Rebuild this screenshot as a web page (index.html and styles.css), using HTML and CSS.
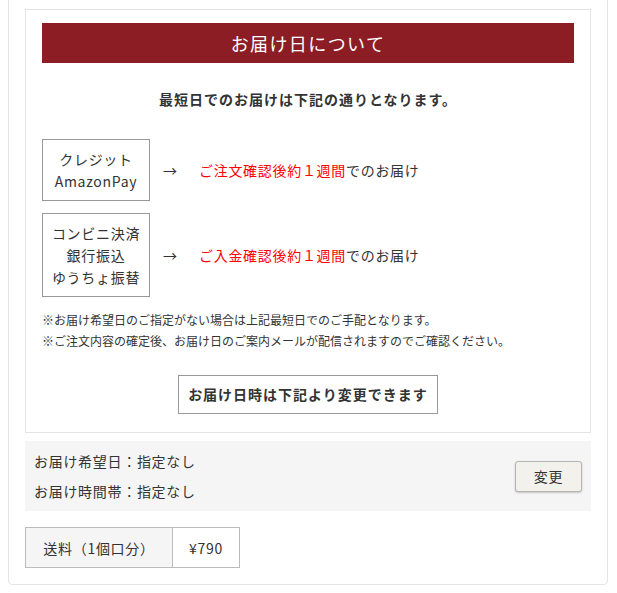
FILE: index.html
```html
<!DOCTYPE html>
<html lang="ja">
  <head>
    <meta charset="UTF-8" />
    <meta name="viewport" content="width=device-width, initial-scale=1.0" />
    <title>お届け日について</title>
    <link rel="stylesheet" href="styles.css">
  </head>
  <body>
    <div class="page">
      <div class="delivery-info">
        <h2 class="delivery-title">お届け日について</h2>
        <p class="lead">最短日でのお届けは下記の通りとなります。</p>

        <div class="pay-row">
          <div class="pay-box">クレジット<br />AmazonPay</div>
          <span class="arrow">→</span>
          <p class="pay-text"><span class="red">ご注文確認後約１週間</span>でのお届け</p>
        </div>
        <div class="pay-row">
          <div class="pay-box">コンビニ決済<br />銀行振込<br />ゆうちょ振替</div>
          <span class="arrow">→</span>
          <p class="pay-text"><span class="red">ご入金確認後約１週間</span>でのお届け</p>
        </div>

        <div class="notes">
          <p>※お届け希望日のご指定がない場合は上記最短日でのご手配となります。</p>
          <p>※ご注文内容の確定後、お届け日のご案内メールが配信されますのでご確認ください。</p>
        </div>

        <div class="change-note">
          <span class="change-label">お届け日時は下記より変更できます</span>
        </div>
      </div>

      <div class="delivery-select">
        <div class="select-values">
          <p>お届け希望日：指定なし</p>
          <p>お届け時間帯：指定なし</p>
        </div>
        <button class="change-btn" type="button">変更</button>
      </div>

      <table class="shipping">
        <tr>
          <th>送料（1個口分）</th>
          <td>¥790</td>
        </tr>
      </table>
    </div>
  </body>
</html>
```

FILE: styles.css
```css
* {
  box-sizing: border-box;
}

body {
  margin: 0;
  background-color: #ffffff;
  color: #333333;
  font-family: "Noto Sans CJK JP", "Noto Sans", sans-serif;
  font-size: 14px;
  letter-spacing: 0.05em;
}

p {
  margin: 0;
}

.page {
  width: 600px;
  margin: -8px 0 0 8px;
  padding: 16px;
  border: 1px solid #e4e4e4;
  border-radius: 4px;
}

.delivery-info {
  padding: 13px 16px 18px;
  border: 1px solid #e4e4e4;
}

.delivery-title {
  margin: 0;
  height: 40px;
  line-height: 40px;
  background-color: #8c1d24;
  color: #ffffff;
  font-size: 18px;
  font-weight: normal;
  letter-spacing: 1.4px;
  text-align: center;
}

.lead {
  margin-top: 26px;
  line-height: 21px;
  font-weight: bold;
  letter-spacing: 1px;
  text-align: center;
}

.pay-row {
  display: flex;
  align-items: center;
  margin-top: 12px;
}

.lead + .pay-row {
  margin-top: 29px;
}

.pay-box {
  width: 108px;
  padding: 8px 0;
  line-height: 22px;
  border: 1px solid #999999;
  text-align: center;
}

.arrow {
  width: 36px;
  margin-left: 13px;
}

.red {
  color: #ff0000;
}

.notes {
  margin-top: 12px;
  font-size: 12px;
  line-height: 21px;
  letter-spacing: 0;
}

.change-note {
  display: flex;
  justify-content: center;
  margin-top: 24px;
}

.change-label {
  height: 39px;
  padding: 8px 9px;
  line-height: 21px;
  border: 1px solid #999999;
  font-weight: bold;
  letter-spacing: 1px;
}

.delivery-select {
  display: flex;
  align-items: center;
  justify-content: space-between;
  margin-top: 8px;
  padding: 5px 9px;
  background-color: #f5f5f5;
}

.select-values p {
  line-height: 30px;
}

.change-btn {
  width: 67px;
  height: 31px;
  padding: 0;
  background-color: #f2f1eb;
  border: 1px solid #b4b4b4;
  border-radius: 3px;
  box-shadow: 0 1px 2px rgba(0, 0, 0, 0.2);
  color: #333333;
  font-family: inherit;
  font-size: 14px;
  letter-spacing: 0.05em;
}

.shipping {
  margin-top: 16px;
  border-collapse: collapse;
}

.shipping th,
.shipping td {
  height: 40px;
  padding: 0;
  border: 1px solid #bbbbbb;
  font-weight: normal;
  text-align: center;
}

.shipping th {
  width: 147px;
  background-color: #f5f5f5;
}

.shipping td {
  width: 67px;
}
```
